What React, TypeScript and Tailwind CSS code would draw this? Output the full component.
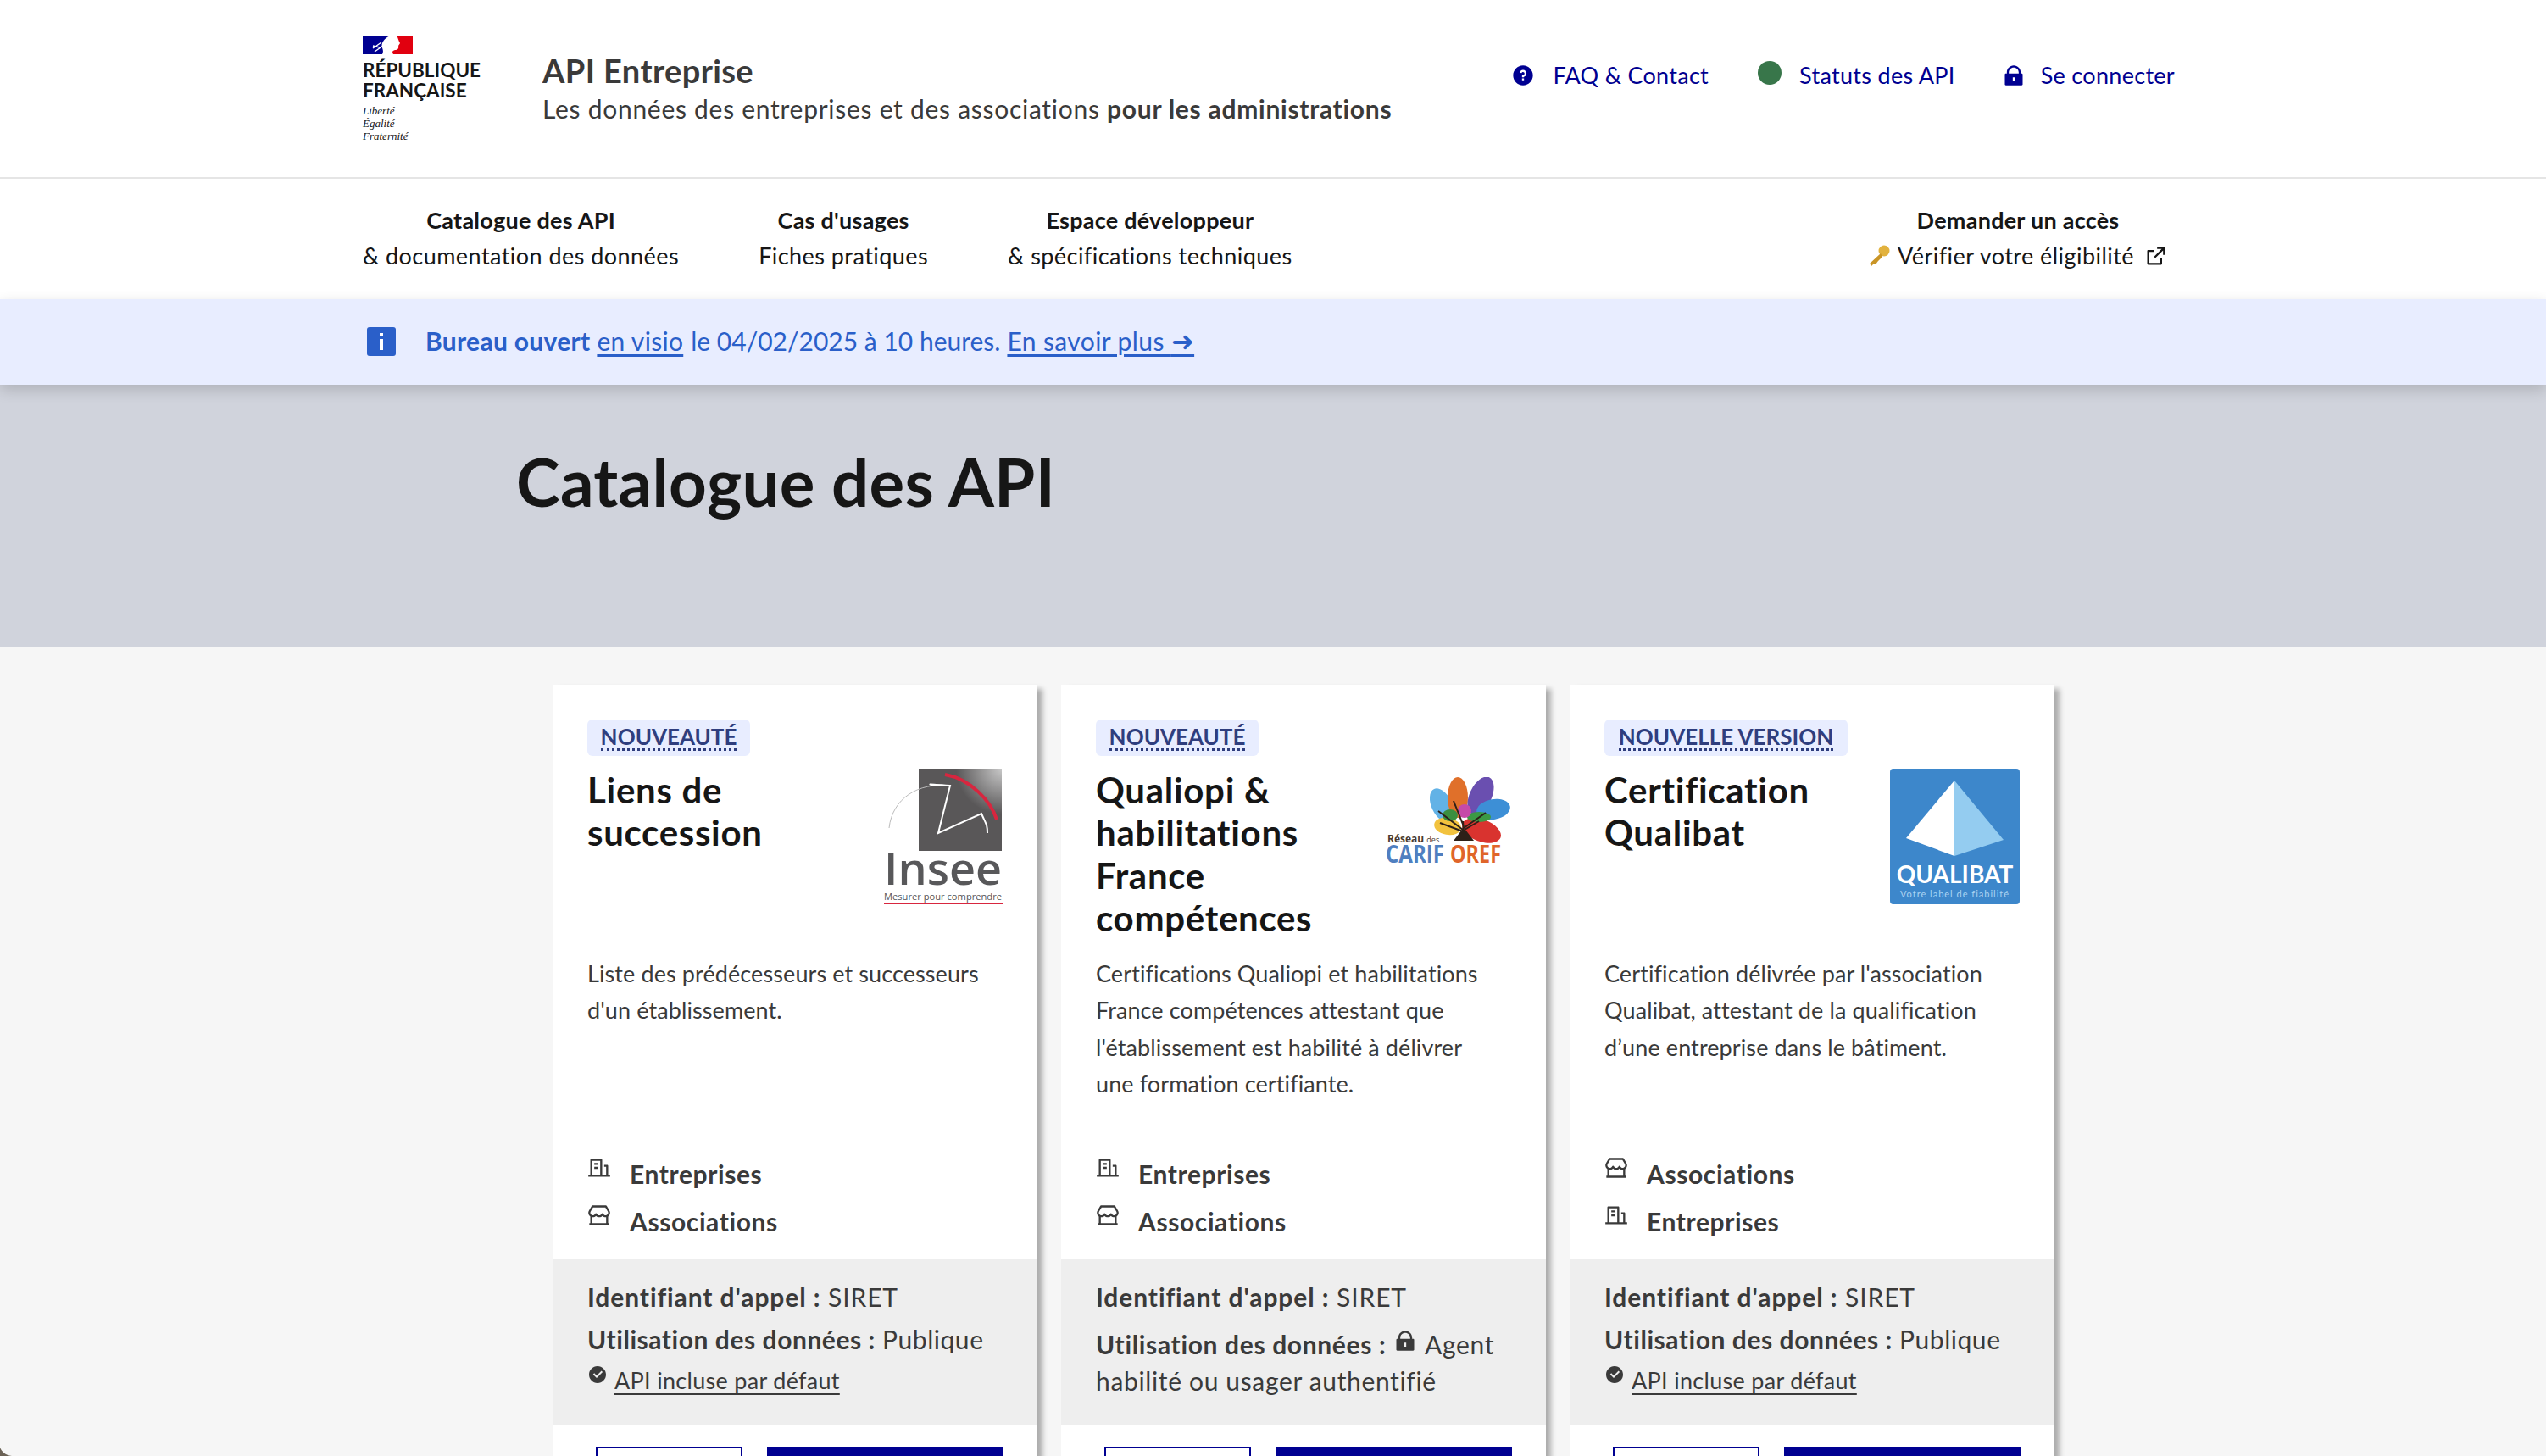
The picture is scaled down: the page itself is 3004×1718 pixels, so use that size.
import React from "react";
import { RiBuildingLine, RiStore2Line, RiCheckboxCircleFill, RiLockFill, RiQuestionFill, RiExternalLinkLine } from "react-icons/ri";

function RFLogo() {
  return (
    <div className="w-[140px] shrink-0 pt-[42px] text-[#161616]">
      <svg width="59" height="22" viewBox="0 0 59 22" className="block">
        <rect width="59" height="22" fill="#000091" />
        <rect x="30" width="29" height="22" fill="#e1000f" />
        <path d="M23 22 C26 17 21 14 23 9 C25 4 30 0 35 0 L40 0 C42 3 42 6 44 9 L42 12 C43 15 41 17 38 17 C34 18 35 20 36 22Z" fill="#fff" />
        <path d="M12 15 L22 8 M14 19 L24 12 M12 12 L20 14" stroke="#fff" strokeWidth="1.4" fill="none" />
      </svg>
      <div className="mt-[7px] text-[22.5px] leading-[23.5px] font-bold">RÉPUBLIQUE<br />FRANÇAISE</div>
      <div className="mt-[5px] text-[13px] leading-[15px] italic font-['Liberation_Serif',serif]">Liberté<br />Égalité<br />Fraternité</div>
    </div>
  );
}

function InseeLogo() {
  return (
    <svg width="140" height="172" viewBox="0 0 140 172" className="block">
      <defs>
        <radialGradient id="ig" cx="1" cy="0" r="0.55">
          <stop offset="0" stopColor="#c8c8c8" />
          <stop offset="1" stopColor="#595758" />
        </radialGradient>
      </defs>
      <rect x="41" y="0" width="98" height="97" fill="url(#ig)" />
      <path d="M6 70 C10 35 40 16 78 20" stroke="#bbb" strokeWidth="1" fill="none" />
      <path d="M62 20 C50 18 50 18 78 20 L64 76 L115 53 C120 65 122 65 122 76" stroke="#fff" strokeWidth="2" fill="none" />
      <path d="M72 7 C102 12 126 38 133 60" stroke="#d8263f" strokeWidth="4" fill="none" />
      <text x="0" y="137" fontSize="52" fontWeight="600" textLength="139" lengthAdjust="spacingAndGlyphs" fill="#58585a" fontFamily="Open Sans, sans-serif">Insee</text>
      <text x="0" y="155" fontSize="10.5" textLength="139" lengthAdjust="spacingAndGlyphs" fill="#58585a" fontFamily="Open Sans, sans-serif">Mesurer pour comprendre</text>
      <rect x="0" y="158.5" width="140" height="1.5" fill="#d8263f" />
    </svg>
  );
}

function CarifLogo() {
  return (
    <svg width="148" height="112" viewBox="0 0 148 112" className="block">
      <ellipse cx="66" cy="33" rx="12" ry="21" transform="rotate(-25 66 33)" fill="#62b2e6" />
      <ellipse cx="85" cy="24" rx="12" ry="24" fill="#e0702a" />
      <ellipse cx="112" cy="22" rx="13" ry="24" transform="rotate(25 112 22)" fill="#6a4fb0" />
      <ellipse cx="127" cy="38" rx="20" ry="12" transform="rotate(-10 127 38)" fill="#3d8fd6" />
      <ellipse cx="73" cy="58" rx="16" ry="10" transform="rotate(10 73 58)" fill="#f2c23e" />
      <ellipse cx="113" cy="63" rx="24" ry="13" transform="rotate(20 113 63)" fill="#d9332f" />
      <ellipse cx="110" cy="47" rx="14" ry="6" fill="#3b9a45" />
      <ellipse cx="76" cy="45" rx="9" ry="7" fill="#3b8f3f" />
      <circle cx="93" cy="40" r="8" fill="#c64aa8" />
      <path d="M90 74 C92 66 92 60 91 52 M91 62 L62 40 M92 58 L80 28 M92 60 L118 42 M91 64 L64 54 M93 62 L110 52" stroke="#2d2018" strokeWidth="2" fill="none" />
      <path d="M80 75 L104 75 L94 62 L90 62Z" fill="#2d2018" />
      <text x="2" y="77" fontSize="12" fontWeight="700" fill="#4a3a30" fontFamily="Open Sans, sans-serif">Réseau <tspan fontSize="9" fontWeight="400">des</tspan></text>
      <text x="0" y="101" fontSize="28" fontWeight="700" textLength="69" lengthAdjust="spacingAndGlyphs" fill="#4f7fc0" fontFamily="Open Sans, sans-serif">CARIF</text>
      <text x="76" y="101" fontSize="28" fontWeight="700" textLength="60" lengthAdjust="spacingAndGlyphs" fill="#e0652a" fontFamily="Open Sans, sans-serif">OREF</text>
    </svg>
  );
}

function QualibatLogo() {
  return (
    <div className="w-[153px] h-[160px] bg-[#3d87cb] rounded-[4px] flex flex-col items-center">
      <svg width="116" height="89" viewBox="0 0 116 89" className="block mt-[14px]">
        <path d="M57 0 L0 68 L57 89Z" fill="#fff" />
        <path d="M57 0 L115 70 L57 89Z" fill="#94ccf0" />
      </svg>
      <div className="mt-[5px] text-[28px] leading-[32px] font-bold text-white">QUALIBAT</div>
      <div className="mt-[1px] text-[11px] leading-[14px] tracking-[1px] text-[#a9d3f2]">Votre label de fiabilité</div>
    </div>
  );
}

function Feature({ kind }: { kind: string }) {
  return (
    <div className="flex items-start h-[56px] text-[30px] leading-[44px] tracking-[0.6px] font-bold text-[#3a3a3a]">
      <span className="w-[50px] shrink-0 pt-[1px]">
        {kind === "Entreprises" ? <RiBuildingLine size={28} /> : <RiStore2Line size={28} />}
      </span>
      {kind}
    </div>
  );
}

type CardProps = {
  tag: string;
  tagW: string;
  title: React.ReactNode;
  logo: React.ReactNode;
  logoPad: string;
  desc: React.ReactNode;
  features: string[];
  footer: React.ReactNode;
};

function Card({ tag, tagW, title, logo, logoPad, desc, features, footer }: CardProps) {
  return (
    <div className="w-[572px] h-[1000px] shrink-0 bg-white flex flex-col shadow-[7px_4px_6px_-1px_rgba(0,0,0,0.3)]">
      <div className="px-[41px] pt-[41px]">
        <div className={`${tagW} h-[43px] bg-[#e8edff] rounded-[6px] flex items-center justify-center text-[26px] leading-[30px] font-bold text-[#2f3e7e]`}>
          <span className="border-b-[3px] border-dotted border-[#2f3e7e] leading-[28px]">{tag}</span>
        </div>
        <div className="flex justify-between mt-[15px] h-[213px]">
          <div className="text-[42px] leading-[50.3px] tracking-[0.7px] font-bold text-[#161616] w-[310px]">{title}</div>
          <div className={logoPad}>{logo}</div>
        </div>
        <div className="mt-[7px] h-[236px] max-w-[475px] text-[27px] leading-[43.3px] tracking-[0.1px] text-[#3a3a3a]">{desc}</div>
      </div>
      <div className="px-[41px] h-[122px]">
        {features.map((f) => (
          <Feature key={f} kind={f} />
        ))}
      </div>
      <div className="h-[197px] bg-[#eeeeee] px-[41px] pt-[20px] text-[30px] leading-[50px] tracking-[0.55px] text-[#3a3a3a]">{footer}</div>
      <div className="flex pl-[51px] pt-[25px] gap-[29px]">
        <div className="w-[173px] h-[60px] border-[2px] border-[#000091]" />
        <div className="w-[279px] h-[60px] bg-[#000091]" />
      </div>
    </div>
  );
}

function Included() {
  return (
    <div className="flex items-start mt-[2px] leading-[44px] tracking-[0.3px] text-[27px]">
      <RiCheckboxCircleFill size={24} className="mt-[3px] mr-[8px] shrink-0 text-[#3a3a3a]" />
      <span className="underline underline-offset-[5px] decoration-2">API incluse par défaut</span>
    </div>
  );
}

function Ident() {
  return (
    <div className="tracking-[0.9px]"><b>Identifiant d'appel :</b> SIRET</div>
  );
}

function App() {
  return (
    <div className="relative w-[3004px] h-[1718px] overflow-hidden bg-[#f6f6f6] font-['Lato',sans-serif] text-[#161616]">
      <header className="h-[211px] bg-white border-b-[2px] border-[#e5e5e5] flex pl-[428px] pr-[438px]">
        <RFLogo />
        <div className="pl-[72px] pt-[60px] shrink-0">
          <div className="text-[38px] leading-[46px] tracking-[0.4px] font-bold text-[#3a3a3a]">API Entreprise</div>
          <div className="text-[30px] leading-[44px] tracking-[0.72px] text-[#3a3a3a]">
            Les données des entreprises et des associations <b>pour les administrations</b>
          </div>
        </div>
        <nav className="ml-auto flex items-start pt-[72px] text-[27px] leading-[34px] tracking-[0.3px] text-[#000091]">
          <div className="flex items-center h-[34px]">
            <RiQuestionFill size={28} className="mr-[21px]" />
            FAQ &amp; Contact
          </div>
          <div className="flex items-center h-[34px] ml-[58px]">
            <span className="w-[28px] h-[28px] rounded-full bg-[#38764a] mr-[21px] -mt-[6px]" />
            Statuts des API
          </div>
          <div className="flex items-center h-[34px] ml-[55px]">
            <RiLockFill size={28} className="mr-[18px]" />
            Se connecter
          </div>
        </nav>
      </header>

      <div className="h-[142px] bg-white flex pl-[428px] pr-[446px] pt-[28px] text-[27px] leading-[42px] tracking-[0.45px] text-center">
        <div>
          <div className="font-bold tracking-[0.25px]">Catalogue des API</div>
          <div>&amp; documentation des données</div>
        </div>
        <div className="ml-[94px]">
          <div className="font-bold tracking-[0.25px]">Cas d'usages</div>
          <div>Fiches pratiques</div>
        </div>
        <div className="ml-[94px]">
          <div className="font-bold tracking-[0.25px]">Espace développeur</div>
          <div>&amp; spécifications techniques</div>
        </div>
        <div className="ml-auto">
          <div className="font-bold tracking-[0.25px]">Demander un accès</div>
          <div className="flex items-center">
            <svg width="26" height="26" viewBox="0 0 26 26" className="mr-[9px]">
              <circle cx="19" cy="7" r="6.5" fill="#e2b23e" />
              <path d="M15 10 L2 22 L4 25 L7 22 L9 23 L12 19 L17 14Z" fill="#c99526" />
            </svg>
            Vérifier votre éligibilité
            <RiExternalLinkLine size={28} className="ml-[12px]" />
          </div>
        </div>
      </div>

      <div className="relative z-10 h-[101px] bg-[#e8edff] flex items-center pl-[433px] pb-[2px] text-[30px] tracking-[0.3px] text-[#2a5fc9] shadow-[0_6px_16px_rgba(0,0,0,0.16)]">
        <div className="w-[34px] h-[34px] rounded-[3px] bg-[#2a5fc9] flex items-center justify-center mr-[35px]">
          <svg width="6" height="20" viewBox="0 0 6 20">
            <rect x="1" y="0" width="4" height="4" fill="#fff" />
            <rect x="1" y="7" width="4" height="13" fill="#fff" />
          </svg>
        </div>
        <b>Bureau ouvert</b>
        <span className="underline underline-offset-[4px] ml-[8px]">en visio</span>
        <span className="ml-[9px] tracking-[0px]">le 04/02/2025 à 10 heures.</span>
        <span className="underline underline-offset-[4px] ml-[8px] tracking-[0.4px]">
          En savoir plus <span className="font-['DejaVu_Sans',sans-serif] text-[32px] leading-[30px]">➜</span>
        </span>
      </div>

      <div className="h-[309px] bg-[#d0d3dc] pl-[609px] pt-[64px]">
        <h1 className="text-[78px] leading-[100px] tracking-[0.3px] font-bold">Catalogue des API</h1>
      </div>

      <main className="flex gap-[28px] pl-[652px] pt-[45px]">
        <Card
          tag="NOUVEAUTÉ"
          tagW="w-[192px]"
          title={<>Liens de succession</>}
          logo={<InseeLogo />}
          logoPad="pt-[0px]"
          desc={<>Liste des prédécesseurs et successeurs d'un établissement.</>}
          features={["Entreprises", "Associations"]}
          footer={
            <>
              <Ident />
              <div><b>Utilisation des données :</b> Publique</div>
              <Included />
            </>
          }
        />
        <Card
          tag="NOUVEAUTÉ"
          tagW="w-[192px]"
          title={<>Qualiopi &amp; habilitations France compétences</>}
          logo={<CarifLogo />}
          logoPad="pt-[10px]"
          desc={<>Certifications Qualiopi et habilitations France compétences attestant que l'établissement est habilité à délivrer une formation certifiante.</>}
          features={["Entreprises", "Associations"]}
          footer={
            <>
              <Ident />
              <div className="leading-[43px] mt-[10px] tracking-[0.65px]">
                <b>Utilisation des données :</b> <RiLockFill size={28} className="inline align-[2px] mr-[2px]" /> Agent habilité ou usager authentifié
              </div>
            </>
          }
        />
        <Card
          tag="NOUVELLE VERSION"
          tagW="w-[287px]"
          title={<>Certification Qualibat</>}
          logo={<QualibatLogo />}
          logoPad="pt-[0px]"
          desc={<>Certification délivrée par l'association Qualibat, attestant de la qualification d’une entreprise dans le bâtiment.</>}
          features={["Associations", "Entreprises"]}
          footer={
            <>
              <Ident />
              <div><b>Utilisation des données :</b> Publique</div>
              <Included />
            </>
          }
        />
      </main>

      <svg width="14" height="10" viewBox="0 0 14 10" className="absolute left-0 bottom-0">
        <path d="M0 0 C2 5 6 9 14 10 L0 10Z" fill="#6b6256" />
      </svg>
    </div>
  );
}

export default App;
